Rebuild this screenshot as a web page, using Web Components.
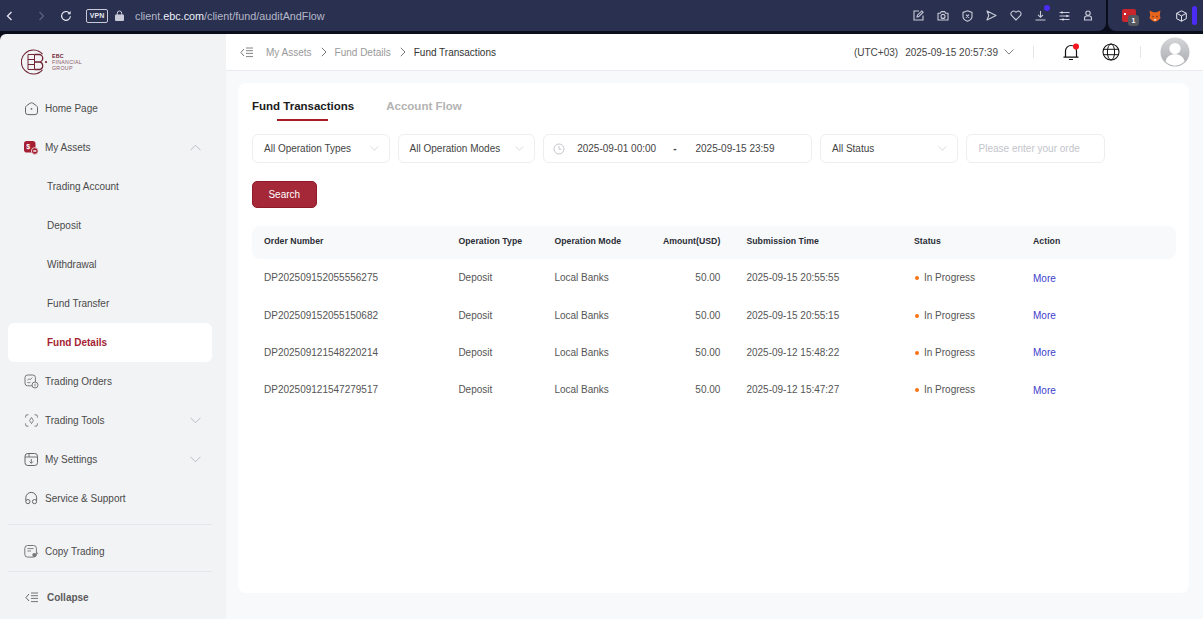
<!DOCTYPE html>
<html lang="en">
<head>
<meta charset="utf-8">
<title>Fund Transactions</title>
<style>
  html, body { margin: 0; height: 100%; overflow: hidden; background: #0a0e1b; }
  body { display: flex; flex-direction: column; font-family: "Liberation Sans", Arial, sans-serif; font-size: 10px; }
  .app { flex: 1; min-height: 0; display: flex; margin-top: 3px; }
</style>
</head>
<body>
<browser-bar></browser-bar>
<div class="app">
  <side-nav>
    <nav-item icon="home" label="Home Page"></nav-item>
    <nav-item icon="assets" label="My Assets" chevron="up"></nav-item>
    <nav-item sub label="Trading Account"></nav-item>
    <nav-item sub label="Deposit"></nav-item>
    <nav-item sub label="Withdrawal"></nav-item>
    <nav-item sub label="Fund Transfer"></nav-item>
    <nav-item sub active label="Fund Details"></nav-item>
    <nav-item icon="orders" label="Trading Orders"></nav-item>
    <nav-item icon="tools" label="Trading Tools" chevron="down"></nav-item>
    <nav-item icon="settings" label="My Settings" chevron="down"></nav-item>
    <nav-item icon="support" label="Service &amp; Support"></nav-item>
  </side-nav>
  <main-area>
    <top-header></top-header>
    <fund-card>
      <tab-bar></tab-bar>
      <filter-bar></filter-bar>
      <fund-table></fund-table>
    </fund-card>
  </main-area>
</div>

<script>
const ICONS = {
  home: `<path d="M1.5 6.8C1.5 5.9 1.900 5.200 2.700 4.600L6 2.300c.9-.6 2.100-.6 3 0l3.300 2.300c.8.6 1.200 1.300 1.200 2.200v4.400a2.400 2.400 0 0 1-2.400 2.400H3.900a2.400 2.400 0 0 1-2.400-2.400z" fill="none" stroke="#666" stroke-width="1"/><circle cx="7.5" cy="7.8" r=".9" fill="#666"/>`,
  assets: `<rect x="0" y="1" width="11.5" height="11.5" rx="2.8" fill="#a51e32"/><text x="2.2" y="8.8" font-size="7" font-weight="700" font-family="Liberation Sans" fill="#fff">$</text><circle cx="10.8" cy="11" r="3.4" fill="#a51e32" stroke="#f2f3f5" stroke-width=".8"/><rect x="9.3" y="10.3" width="3" height="1.4" fill="#fff"/>`,
  orders: `<rect x="1" y="1" width="10.4" height="10.8" rx="2.6" fill="none" stroke="#777" stroke-width="1"/><path d="M3.4 6.2 5 4.700l1.200 1L8.400 3.600M3.400 8.600h3" fill="none" stroke="#777" stroke-width=".9"/><circle cx="11" cy="11" r="3" fill="#f2f3f5" stroke="#777" stroke-width="1"/><path d="M11 9.600v2.800" stroke="#777" stroke-width=".9"/>`,
  tools: `<path d="M4.400 1.800H3.200a1.600 1.600 0 0 0-1.600 1.600v1.200M10.600 1.800h1.200a1.600 1.600 0 0 1 1.600 1.600v1.200M4.400 13.200H3.200a1.600 1.600 0 0 1-1.600-1.600v-1.200M10.600 13.200h1.200a1.600 1.600 0 0 0 1.600-1.600v-1.200" fill="none" stroke="#777" stroke-width="1"/><path d="M7.500 4.400 9.400 7.500 7.500 10.600 5.600 7.500z" fill="none" stroke="#777" stroke-width=".9"/>`,
  settings: `<rect x="1" y="1.5" width="12.5" height="12" rx="2.8" fill="none" stroke="#666" stroke-width="1"/><path d="M1 5h12.500M5 1.500V5M7.300 7v4.200M5.600 9.600l1.700 1.700L9 9.600" fill="none" stroke="#666" stroke-width=".9"/>`,
  support: `<path d="M1.800 9.600V6.800a5.400 5.400 0 0 1 10.800 0v2.800" fill="none" stroke="#666" stroke-width="1"/><path d="M1.800 10.600a2.100 2.100 0 1 0 4.200 0 2.100 2.100 0 0 0-4.200 0zM8.400 10.600a2.100 2.100 0 1 0 4.200 0 2.100 2.100 0 0 0-4.200 0z" fill="none" stroke="#666" stroke-width="1"/>`,
  copy: `<rect x=".8" y="1.5" width="11.6" height="11.6" rx="2.8" fill="none" stroke="#777" stroke-width="1"/><path d="M3.400 4.600h6.200M3.400 7h3.600" stroke="#777" stroke-width=".9"/><circle cx="10.4" cy="11" r="2.1" fill="#777"/><path d="M13 8.800l1.200 1" stroke="#777"/>`
};

const chevron = (dir, color = '#b5b7bc', w = 11) => `<svg width="${w}" height="${Math.round(w * .6)}" viewBox="0 0 11 6.6"><path d="${dir === 'up' ? 'M.6 6 5.500 1l4.900 5' : 'M.6.6l4.900 5 4.900-5'}" fill="none" stroke="${color}" stroke-width=".9"/></svg>`;

const collapseIcon = (color) => `<svg width="13" height="11" viewBox="0 0 13 11"><path d="M4 2 .9 5.500 4 9" fill="none" stroke="${color}" stroke-width="1"/><path d="M6 1h7M6 3.700h7M6 6.400h7M6 9.600h7" stroke="${color}" stroke-width=".9"/></svg>`;

class BrowserBar extends HTMLElement {
  constructor() {
    super();
    this.attachShadow({ mode: 'open' });
  }

  connectedCallback() {
    const s = 'fill="none" stroke="#c9ccd8" stroke-width="1.1"';
    this.shadowRoot.innerHTML = `
      <style>
        :host { display: flex; height: 31px; flex: none; color: #b4b8c8; font: 10.8px "Liberation Sans", Arial, sans-serif; }
        .left { flex: 1; background: #2a3050; border-radius: 0 0 8px 0; display: flex; align-items: center; padding-left: 6px; }
        .right { width: 95px; margin-left: 2px; background: #2a3050; border-radius: 0 0 0 8px; display: flex; align-items: center; }
        svg { display: block; flex: none; }
        .vpn { margin-left: 14px; width: 20px; height: 12px; border: 1px solid #c9ccd8; border-radius: 2px; color: #e4e6ee; font: 700 7px "Liberation Sans", Arial, sans-serif; display: flex; align-items: center; justify-content: center; }
        .url { margin-left: 11px; white-space: nowrap; }
        .url b { font-weight: 400; color: #eef0f6; }
        .tools { margin-left: auto; margin-right: 13px; display: flex; align-items: center; gap: 13px; }
        .dl { position: relative; }
        .dl i { position: absolute; right: -4px; top: -5px; width: 6px; height: 6px; border-radius: 50%; background: #4a2cf5; }
        .red { position: relative; margin-left: 14px; width: 14px; height: 13px; background: #c9252c; border-radius: 2px; }
        .red::before { content: ""; position: absolute; left: 2px; top: 4px; width: 2px; height: 2px; background: #fff; }
        .red span { position: absolute; left: 6px; top: 6px; width: 11px; height: 11px; border-radius: 3px; background: #55585f; color: #fff; font: 700 7px "Liberation Sans", Arial, sans-serif; display: flex; align-items: center; justify-content: center; }
        .pill { margin-left: 5px; width: 5px; height: 19px; border-radius: 3px; background: #4a2cf5; }
      </style>
      <div class="left">
        <svg width="7" height="10" viewBox="0 0 7 10"><path d="M5.500 1 1.500 5l4 4" fill="none" stroke="#e4e6ee" stroke-width="1.3"/></svg>
        <svg style="margin-left:25px" width="7" height="10" viewBox="0 0 7 10"><path d="M1.500 1l4 4-4 4" fill="none" stroke="#5e647e" stroke-width="1.2"/></svg>
        <svg style="margin-left:15px" width="12" height="12" viewBox="0 0 12 12"><path d="M10.400 6.200A4.400 4.400 0 1 1 9 2.700" fill="none" stroke="#e4e6ee" stroke-width="1.2"/><path d="M10.600 1v3.200H7.400z" fill="#e4e6ee"/></svg>
        <div class="vpn">VPN</div>
        <svg style="margin-left:7px" width="9" height="11" viewBox="0 0 9 11"><path d="M2.300 5V3.200a2.200 2.200 0 0 1 4.400 0V5" fill="none" stroke="#c9ccd8" stroke-width="1"/><rect y="4.6" width="9" height="6.4" rx="1" fill="#c9ccd8"/></svg>
        <div class="url">client.<b>ebc.com</b>/client/fund/auditAndFlow</div>
        <div class="tools">
          <svg width="11" height="11" viewBox="0 0 11 11"><path d="M6 1H1v9h9V5.400" ${s}/><path d="M4 7l.4-1.800L8.800.9l1.300 1.300L5.800 6.600z" ${s}/></svg>
          <svg width="12" height="11" viewBox="0 0 12 11"><path d="M1 3.200h2.400L4.300 1.600h3.400l.9 1.600H11V10H1z" ${s} stroke-linejoin="round"/><circle cx="6" cy="6.400" r="2" ${s}/></svg>
          <svg width="11" height="12" viewBox="0 0 11 12"><path d="M5.500.8 10 2.400v4c0 2.300-2 3.900-4.500 4.900C3 10.300 1 8.700 1 6.400v-4z" ${s}/><path d="M4 4.600l3 3m0-3-3 3" ${s}/></svg>
          <svg width="11" height="11" viewBox="0 0 11 11"><path d="M1 1l9 4.500-9 4.500 1.800-4.500z" ${s} stroke-linejoin="round"/></svg>
          <svg width="12" height="11" viewBox="0 0 12 11"><path d="M6 10 1.500 5.500A2.700 2.700 0 0 1 6 2.300a2.700 2.700 0 0 1 4.500 3.200z" ${s}/></svg>
          <div class="dl"><svg width="11" height="11" viewBox="0 0 11 11"><path d="M5.500 1v6M3 4.800l2.500 2.500L8 4.800M.5 10h10" ${s}/></svg><i></i></div>
          <svg width="11" height="10" viewBox="0 0 11 10"><path d="M.5 1.500h10M.5 5h10M.5 8.500h10" stroke="#c9ccd8" stroke-width="1.1"/><path d="M3 .5v2M8 4v2M4 7.500v2" stroke="#e4e6ee" stroke-width="1.4"/></svg>
          <svg width="10" height="11" viewBox="0 0 10 11"><circle cx="5" cy="3.200" r="2.200" ${s}/><path d="M1.500 10V8.300c0-1.300 1-2.300 2.300-2.300h2.400c1.300 0 2.300 1 2.300 2.300V10z" ${s}/></svg>
        </div>
      </div>
      <div class="right">
        <div class="red"><span>1</span></div>
        <svg style="margin-left:13px" width="12" height="12" viewBox="0 0 12 12"><path d="M.6.6 4.300 2.300h3.400L11.400.6l-.6 5 .8 2.500L9 10.600 7.300 11.400H4.700L3 10.600.4 8.100l.8-2.500z" fill="#e8651e"/><path d="M3.300 5.600 5 6.700 3.800 7.500zM8.700 5.600 7 6.700 8.200 7.500z" fill="#3a2a1e"/><path d="M4.700 9h2.600l-.6 1.800H5.300z" fill="#f6d5b5"/></svg>
        <svg style="margin-left:15px" width="11" height="12" viewBox="0 0 11 12"><path d="M5.500.8 10.300 3.300v5.400L5.500 11.200.7 8.700V3.300zM.7 3.300 5.500 5.900l4.800-2.600M5.500 5.900v5.300" fill="none" stroke="#e4e6ee" stroke-width="1"/></svg>
        <div class="pill"></div>
      </div>
    `;
  }
}

class SideNav extends HTMLElement {
  constructor() {
    super();
    this.attachShadow({ mode: 'open' });
  }

  connectedCallback() {
    this.shadowRoot.innerHTML = `
      <style>
        :host { display: flex; flex-direction: column; flex: none; width: 226px; background: #f2f3f5; border-radius: 6px 0 0 0; box-sizing: border-box; padding: 0 14px 0 8px; }
        .logo { height: 54.5px; flex: none; display: flex; align-items: center; gap: 4px; padding: 1px 0 0 13px; box-sizing: border-box; }
        .logo div { color: #8b5a66; font-size: 5.3px; line-height: 6px; letter-spacing: .25px; }
        .logo b { color: #6f2534; }
        hr { flex: none; border: 0; border-top: 1px solid #e6e7ea; margin: 6px 0 7px; width: 100%; }
        .copy + hr { margin: 0 0 7px; }
        .collapse { display: flex; align-items: center; gap: 9px; padding-left: 17px; height: 39px; margin-top: -.5px; color: #5c5c5c; font-weight: 700; }
      </style>
      <div class="logo">
        <svg width="27" height="26" viewBox="0 0 27 26">
          <path d="M21.500 5.200A12 12 0 1 0 21.500 20.800" fill="none" stroke="#6f2534" stroke-width="1.1"/>
          <path d="M13.500 5.500H7v15h6.500M7 10.500h6.500M7 15.500h6.500M13.500 5.500v15" fill="none" stroke="#6f2534" stroke-width="1"/>
          <path d="M13.500 5.500h4.500a3.500 3.500 0 0 1 0 7.500h-4.500h5a3.800 3.800 0 0 1 0 7.500h-5" fill="none" stroke="#6f2534" stroke-width="1.3"/>
          <circle cx="25" cy="13" r="1.1" fill="#6f2534"/>
        </svg>
        <div><b>EBC</b><br>FINANCIAL<br>GROUP</div>
      </div>
      <slot></slot>
      <hr>
      <nav-item class="copy" icon="copy" label="Copy Trading"></nav-item>
      <hr>
      <div class="collapse">${collapseIcon('#666')}<span>Collapse</span></div>
    `;
  }
}

class NavItem extends HTMLElement {
  constructor() {
    super();
    this.attachShadow({ mode: 'open' });
  }

  connectedCallback() {
    const icon = this.getAttribute('icon');
    const dir = this.getAttribute('chevron');
    this.shadowRoot.innerHTML = `
      <style>
        :host { display: flex; flex: none; align-items: center; height: 39px; padding: 0 11px 0 16px; border-radius: 6px; color: #4a4a4a; font-size: 10px; white-space: nowrap; }
        :host([sub]) { padding-left: 39px; }
        :host([active]) { background: #fff; color: #a51e32; font-weight: 700; }
        svg.ico { display: block; margin-right: 6px; }
        span { flex: 1; }
      </style>
      ${icon ? `<svg class="ico" width="15" height="15" viewBox="0 0 15 15">${ICONS[icon]}</svg>` : ''}
      <span>${this.getAttribute('label').replace('&', '&amp;')}</span>
      ${dir ? chevron(dir) : ''}
    `;
  }
}

class MainArea extends HTMLElement {
  constructor() {
    super();
    this.attachShadow({ mode: 'open' });
    this.shadowRoot.innerHTML = `
      <style>
        :host { display: flex; flex-direction: column; flex: 1; min-width: 0; background: #f8f9fb; }
      </style>
      <slot></slot>
    `;
  }
}

class TopHeader extends HTMLElement {
  constructor() {
    super();
    this.attachShadow({ mode: 'open' });
  }

  connectedCallback() {
    const arrow = `<svg class="sep" width="6" height="10" viewBox="0 0 6 10"><path d="M.8.8 5 5 .8 9.200" fill="none" stroke="#777" stroke-width="1"/></svg>`;
    this.shadowRoot.innerHTML = `
      <style>
        :host { display: flex; align-items: center; flex: none; height: 36px; box-sizing: content-box; background: #fff; border-bottom: 1px solid #e9ebef; border-radius: 0 6px 0 0; padding: 0 13px 0 14px; color: #999; font-size: 10px; white-space: nowrap; }
        svg { display: block; flex: none; }
        .sep { margin: 0 8px 0 9px; }
        .crumb-start { margin-left: 13px; }
        .current { color: #333; }
        .time { margin-left: auto; color: #444; display: flex; align-items: center; gap: 6px; }
        .time span:first-child { margin-right: 1px; }
        .bar { width: 1px; height: 12px; background: #e3e5e9; }
      </style>
      ${collapseIcon('#777')}
      <span class="crumb-start">My Assets</span>${arrow}<span>Fund Details</span>${arrow}<span class="current">Fund Transactions</span>
      <div class="time"><span>(UTC+03)</span><span>2025-09-15 20:57:39</span>${chevron('down', '#666', 10)}</div>
      <div class="bar" style="margin-left:19px"></div>
      <svg style="margin-left:28px" width="18" height="18" viewBox="0 0 18 18">
        <path d="M3.500 14V8a5.500 5.500 0 0 1 11 0v6M1.500 14.200h15M7 16.500h4" fill="none" stroke="#111" stroke-width="1.2"/>
        <circle cx="14" cy="3.600" r="3" fill="#f4141c"/>
      </svg>
      <svg style="margin-left:22px" width="18" height="18" viewBox="0 0 18 18">
        <circle cx="9" cy="9" r="8" fill="none" stroke="#111" stroke-width="1.1"/>
        <ellipse cx="9" cy="9" rx="3.6" ry="8" fill="none" stroke="#111" stroke-width="1"/>
        <path d="M1.500 6.300h15M1.500 11.700h15" stroke="#111" stroke-width="1"/>
      </svg>
      <div class="bar" style="margin-left:20px"></div>
      <svg style="margin-left:19px" width="30" height="30" viewBox="0 0 30 30">
        <defs><linearGradient id="av" x1="0" y1="0" x2="0" y2="1"><stop offset="0" stop-color="#d5d6d8"/><stop offset="1" stop-color="#a9abaf"/></linearGradient></defs>
        <circle cx="15" cy="15" r="14.5" fill="url(#av)"/>
        <circle cx="15" cy="11.5" r="5.6" fill="#fff"/>
        <path d="M5.500 24.500c1-5 5-7.300 9.500-7.300s8.500 2.300 9.500 7.300a13 13 0 0 1-19 0z" fill="#fff"/>
      </svg>
    `;
  }
}

class FundCard extends HTMLElement {
  constructor() {
    super();
    this.attachShadow({ mode: 'open' });
    this.shadowRoot.innerHTML = `
      <style>
        :host { display: block; margin: 12px 14px 26px 12px; flex: 1; min-height: 0; background: #fff; border-radius: 8px; padding: 0 13px 0 14px; }
      </style>
      <slot></slot>
    `;
  }
}

class TabBar extends HTMLElement {
  constructor() {
    super();
    this.attachShadow({ mode: 'open' });
  }

  connectedCallback() {
    this.shadowRoot.innerHTML = `
      <style>
        :host { display: flex; gap: 32px; height: 51px; padding-top: 16px; box-sizing: border-box; font-size: 11.5px; font-weight: 700; line-height: 14px; }
        .on { position: relative; color: #1c1c1c; }
        .on::after { content: ""; position: absolute; left: 25px; width: 51px; top: 20px; height: 1.5px; background: #a81c24; }
        .off { color: #b3b3b3; }
      </style>
      <div class="on">Fund Transactions</div>
      <div class="off">Account Flow</div>
    `;
  }
}

class FilterSelect extends HTMLElement {
  constructor() {
    super();
    this.attachShadow({ mode: 'open' });
    this.shadowRoot.innerHTML = `
      <style>
        :host { display: flex; align-items: center; justify-content: space-between; box-sizing: border-box; width: 137.6px; height: 29px; padding: 0 10px 0 11px; border: 1px solid #eceef2; border-radius: 6px; color: #444; font-size: 10px; white-space: nowrap; }
      </style>
      <slot></slot>${chevron('down', '#c5c7cc', 9)}
    `;
  }
}

class FilterBar extends HTMLElement {
  constructor() {
    super();
    this.attachShadow({ mode: 'open' });
  }

  connectedCallback() {
    this.shadowRoot.innerHTML = `
      <style>
        :host { display: block; color: #444; font-size: 10px; }
        .row { display: flex; gap: 8px; }
        .box { display: flex; align-items: center; box-sizing: border-box; height: 29px; border: 1px solid #eceef2; border-radius: 6px; white-space: nowrap; }
        .date { width: 268.8px; padding-left: 9px; }
        .date svg { display: block; margin-right: 12px; }
        .date .dash { margin: 0 19px 0 17px; font-weight: 700; }
        .order { width: 139px; padding-left: 12px; color: #c3c5cb; }
        button { display: block; margin-top: 18px; width: 64.5px; height: 27px; padding: 0; border: 1px solid #8f1a2a; border-radius: 5px; background: #a42837; color: #fff; font: 10px "Liberation Sans", Arial, sans-serif; }
      </style>
      <div class="row">
        <filter-select>All Operation Types</filter-select>
        <filter-select>All Operation Modes</filter-select>
        <div class="box date">
          <svg width="12" height="12" viewBox="0 0 12 12"><circle cx="6" cy="6" r="5" fill="none" stroke="#c5c7cc"/><path d="M6 3v3.200h2.500" fill="none" stroke="#c5c7cc"/></svg>
          <span>2025-09-01 00:00</span><span class="dash">-</span><span>2025-09-15 23:59</span>
        </div>
        <filter-select>All Status</filter-select>
        <div class="box order"><span>Please enter your orde</span></div>
      </div>
      <button type="button">Search</button>
    `;
  }
}

class FundTable extends HTMLElement {
  constructor() {
    super();
    this.attachShadow({ mode: 'open' });
    this._orders = [
      { id: 'DP202509152055556275', time: '2025-09-15 20:55:55' },
      { id: 'DP202509152055150682', time: '2025-09-15 20:55:15' },
      { id: 'DP202509121548220214', time: '2025-09-12 15:48:22' },
      { id: 'DP202509121547279517', time: '2025-09-12 15:47:27' }
    ];
  }

  connectedCallback() {
    this.shadowRoot.innerHTML = `
      <style>
        :host { display: block; margin-top: 18px; width: 924px; font-size: 10px; color: #555; }
        .row { display: grid; grid-template-columns: 194.4px 96px 96px 96px 167.6px 119px 1fr; align-items: center; height: 37.4px; white-space: nowrap; }
        .row > * { padding-left: 12px; }
        .head { height: 33px; box-sizing: border-box; padding-bottom: 3px; background: #f8f9fb; border-radius: 8px; color: #2a2d35; font-size: 8.7px; font-weight: 700; letter-spacing: .05px; }
        .row > .num { padding: 0 14px 0 0; text-align: right; }
        .status { color: #555; display: flex; align-items: center; }
        .status i { width: 4px; height: 4px; margin: 1px 5px 0 1px; border-radius: 50%; background: #f97316; }
        .more { color: #3d3dcc; padding-top: 1px; }
      </style>
      <div class="row head">
        <div>Order Number</div><div>Operation Type</div><div>Operation Mode</div>
        <div class="num">Amount(USD)</div><div>Submission Time</div><div>Status</div><div>Action</div>
      </div>
      ${this._orders.map(o => `
        <div class="row">
          <div>${o.id}</div><div>Deposit</div><div>Local Banks</div>
          <div class="num">50.00</div><div>${o.time}</div>
          <div class="status"><i></i>In Progress</div>
          <div class="more">More</div>
        </div>
      `).join('')}
    `;
  }
}

customElements.define('browser-bar', BrowserBar);
customElements.define('nav-item', NavItem);
customElements.define('side-nav', SideNav);
customElements.define('main-area', MainArea);
customElements.define('top-header', TopHeader);
customElements.define('fund-card', FundCard);
customElements.define('tab-bar', TabBar);
customElements.define('filter-select', FilterSelect);
customElements.define('filter-bar', FilterBar);
customElements.define('fund-table', FundTable);
</script>
</body>
</html>
